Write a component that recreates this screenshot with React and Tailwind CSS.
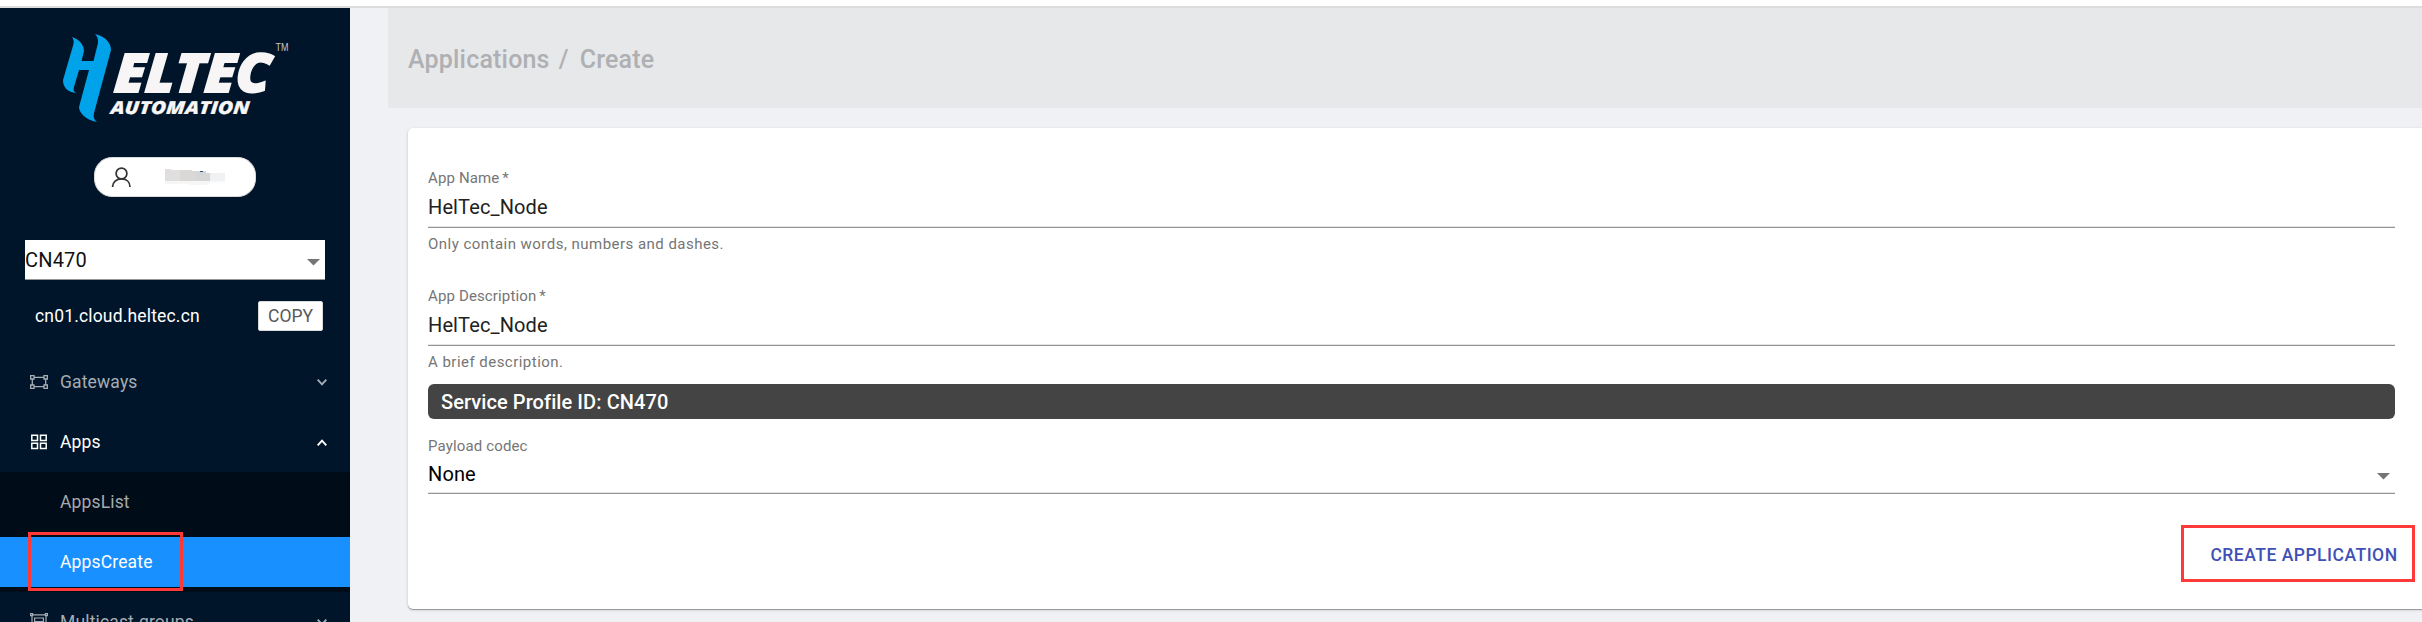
const ROBOTO = "font-['Roboto',sans-serif]";

function Logo() {
  return (
    <svg width="350" height="149" viewBox="0 8 350 149" className="block shrink-0">
      <path
        fill="#00a2e9"
        d="M72 37C79 39 84 45 84 51L81.500 61H93.500L98 43C98.500 39 97 36 95 34C104 36 111 42 111 50L94 113C93 117 94 120 97 122C86 120 79 113 79 107L89 70H79L74 87C73 90 74 92 76 93C68 92 63 88 63 80L73.500 44C74 41 73.500 39 72 37Z"
      />
      <g fill="#f7f5f6" stroke="#f7f5f6" fontFamily="'Open Sans', sans-serif" fontWeight="800" fontStyle="italic">
        <text transform="translate(113.500 92.300) skewX(-4)" fontSize="53.500" strokeWidth="1.800" textLength="156" lengthAdjust="spacingAndGlyphs">ELTEC</text>
        <text transform="translate(110.300 113.800) skewX(-4)" fontSize="18" strokeWidth="0.200" textLength="139" lengthAdjust="spacingAndGlyphs">AUTOMATION</text>
      </g>
      <text x="275.500" y="50.500" fontSize="10.500" fill="#c3c8cd" fontFamily="Liberation Sans, sans-serif" textLength="13" lengthAdjust="spacingAndGlyphs">TM</text>
    </svg>
  );
}

function UserBadge() {
  return (
    <div className="ml-[94px] flex h-10 w-[162px] shrink-0 items-center rounded-[18px] border border-[#d9d9d9] bg-white">
      <svg width="20" height="20" viewBox="0 0 20 20" className="ml-4 shrink-0" fill="none" stroke="#333" strokeWidth="1.700">
        <circle cx="10.500" cy="6.500" r="5.400" />
        <path d="M1.500 20C1.500 15 5.500 11.800 10.500 11.800S19 15 19 20" />
      </svg>
      <svg width="60" height="18" viewBox="0 0 60 18" className="ml-[34px] shrink-0" shapeRendering="crispEdges">
        <path fill="#e0dede" d="M0 1H6V2H15V13H0Z" />
        <path fill="#d9d8d6" d="M15 2H27V3H30V13H15Z" />
        <path fill="#d5d7d6" d="M30 3H41V5H45V13H30Z" />
        <path fill="#eff1f3" d="M45 5H60V13H45Z" />
        <path fill="#f6f6f6" d="M0 13H45V16H42V17H24V16H0Z" />
        <path fill="#fafafa" d="M45 13H60V15H45Z" />
        <path fill="#2b4f8f" d="M35 3H38V4H35Z" />
      </svg>
    </div>
  );
}

function Triangle({ className }) {
  return (
    <svg width="13" height="7" viewBox="0 0 13 7" className={className}>
      <path d="M0 0H13L6.500 6.500Z" fill="#757575" />
    </svg>
  );
}

function GatewayIcon() {
  return (
    <svg width="18" height="14" viewBox="0 0 18 14" fill="none" stroke="currentColor" strokeWidth="1.300">
      <path d="M.65 .65H4V4H.65ZM14 .65H17.350V4H14ZM.65 10H4V13.350H.65ZM14 10H17.350V13.350H14ZM4 2.300H14M4 11.700H14M2.300 4V10M15.700 4V10" />
    </svg>
  );
}

function AppsIcon() {
  return (
    <svg width="18" height="16" viewBox="0 0 18 16" fill="none" stroke="currentColor" strokeWidth="1.500">
      <path d="M1.800 1.200H7.500V6.500H1.800ZM10.500 1.200H16.200V6.500H10.500ZM1.800 9.200H7.500V14.500H1.800ZM10.500 9.200H16.200V14.500H10.500Z" />
    </svg>
  );
}

function GroupIcon() {
  return (
    <svg width="18" height="18" viewBox="0 0 18 18" fill="none" stroke="currentColor" strokeWidth="1.200">
      <path d="M2 2.500V15.500M16 2.500V15.500M2.500 1.800H15.500M2.500 16.200H15.500M4.600 5H13.400V8.500H4.600ZM4.600 11H13.400V13.500H4.600Z" />
      <path d="M.6 .6H2.600V2.600H.6ZM15.400 .6H17.400V2.600H15.400ZM.6 15.400H2.600V17.400H.6ZM15.400 15.400H17.400V17.400H15.400Z" />
    </svg>
  );
}

function Chevron({ up }) {
  return (
    <svg width="10" height="7" viewBox="0 0 10 7" className="ml-auto" fill="none" stroke="currentColor" strokeWidth="1.900">
      <path d={up ? "M.7 6.300L5 1.700L9.300 6.300" : "M.7 .7L5 5.300L9.300 .7"} />
    </svg>
  );
}

function MenuTitle({ icon, label, open }) {
  return (
    <div className={`flex h-[50px] shrink-0 items-center pl-[30px] pr-[23px] ${open ? "text-white" : "text-[#a6adb4]"}`}>
      <span className="w-[30px]">{icon}</span>
      <span>{label}</span>
      <Chevron up={open} />
    </div>
  );
}

function Sidebar() {
  return (
    <aside className="flex w-[350px] shrink-0 flex-col overflow-hidden bg-[#001529] text-[17.5px]">
      <Logo />
      <UserBadge />
      <div className="mt-[43px] ml-[25px] flex h-10 w-[300px] shrink-0 items-center justify-between border-b border-[#949494] bg-white pr-[5px] text-[20px] tracking-[0.19px] text-[#111]">
        <span>CN470</span>
        <Triangle className="mt-[5px]" />
      </div>
      <div className="mt-[21px] ml-[35px] flex h-[30px] w-[288px] shrink-0 items-center justify-between text-white">
        <span className="tracking-[0.17px]">cn01.cloud.heltec.cn</span>
        <span className="flex h-[30px] w-[65px] items-center justify-center rounded-[2px] border border-[#d9d9d9] bg-white text-[#595959]">COPY</span>
      </div>
      <nav className="mt-[26px] flex flex-col tracking-[0.15px]">
        <MenuTitle icon={<GatewayIcon />} label="Gateways" />
        <div className="mt-[10px] flex flex-col">
          <MenuTitle icon={<AppsIcon />} label="Apps" open />
        </div>
        <div className="mt-[5px] flex flex-col bg-[#000c17] pt-[5px] pb-[5px]">
          <div className="flex h-[50px] items-center pl-[60px] text-[#a6a9ad]">AppsList</div>
          <div className="relative mt-[10px] flex h-[50px] items-center bg-[#1890ff] pl-[60px] text-white">
            AppsCreate
            <span className="absolute top-[-5px] left-[28px] h-[59px] w-[155px] border-3 border-[#ff3838]" />
          </div>
        </div>
        <div className="mt-[5px] flex flex-col">
          <MenuTitle icon={<GroupIcon />} label="Multicast-groups" />
        </div>
      </nav>
    </aside>
  );
}

function Field({ label, required, value, hint, select }) {
  return (
    <div className="flex flex-col">
      <span className="h-5 text-[15px] leading-5 tracking-[0.14px] text-[#757575]">
        {label}
        {required && <span className="ml-[-1px]"> *</span>}
      </span>
      <div
        className={`flex items-center justify-between border-b border-[#949494] pr-[5px] text-[20px] tracking-[0.12px] shadow-[inset_0_-1px_0_#e4e4e4] ${select ? "h-[38px] text-black" : "h-[40px] text-[#212121]"}`}
      >
        <span className="pb-[2px]">{value}</span>
        {select && <Triangle className="mt-[4px]" />}
      </div>
      {hint && <span className="mt-[6px] h-5 text-[15px] leading-5 tracking-[0.47px] text-[#757575]">{hint}</span>}
    </div>
  );
}

export default function App() {
  return (
    <div className={`flex h-[622px] w-[2422px] flex-col overflow-hidden bg-white pt-[6px] ${ROBOTO}`}>
      <div className="h-[2px] shrink-0 bg-[#dadcde]" />
      <div className="flex h-[614px]">
        <Sidebar />
        <main className="flex min-w-0 grow flex-col bg-[#f0f1f5] pl-[38px]">
          <header className="flex h-[100px] shrink-0 items-center bg-[#e7e8ea] pt-[3px] pl-5 text-[25px] font-medium tracking-[0.19px] text-[#afb0b3]">
            <span>Applications</span>
            <span className="mr-[11px] ml-[9px]">/</span>
            <span>Create</span>
          </header>
          <section className="mt-5 mr-[-10px] ml-5 flex h-[481px] flex-col rounded-[5px] bg-white pt-[40px] pr-[37px] pl-5 shadow-[0_1px_3px_rgba(0,0,0,0.2),0_1px_0_rgba(0,0,0,0.25)]">
            <Field label="App Name" required value="HelTec_Node" hint="Only contain words, numbers and dashes." />
            <div className="mt-[32px]">
              <Field label="App Description" required value="HelTec_Node" hint="A brief description." />
            </div>
            <div className="mt-[12px] flex h-[35px] items-center rounded-[6px] bg-[#444] pl-[13px] text-[20px] font-medium tracking-[0.08px] text-white">
              Service Profile ID: CN470
            </div>
            <div className="mt-[17px]">
              <Field label="Payload codec" value="None" select />
            </div>
            <div className="mt-[31px] mr-[-20px] flex h-[57px] w-[234px] items-center justify-center self-end border-3 border-[#ff3838] pt-[4px] pl-[12px] text-[17.5px] font-medium tracking-[0.5px] text-[#3f51b5]">
              CREATE APPLICATION
            </div>
          </section>
        </main>
      </div>
    </div>
  );
}
